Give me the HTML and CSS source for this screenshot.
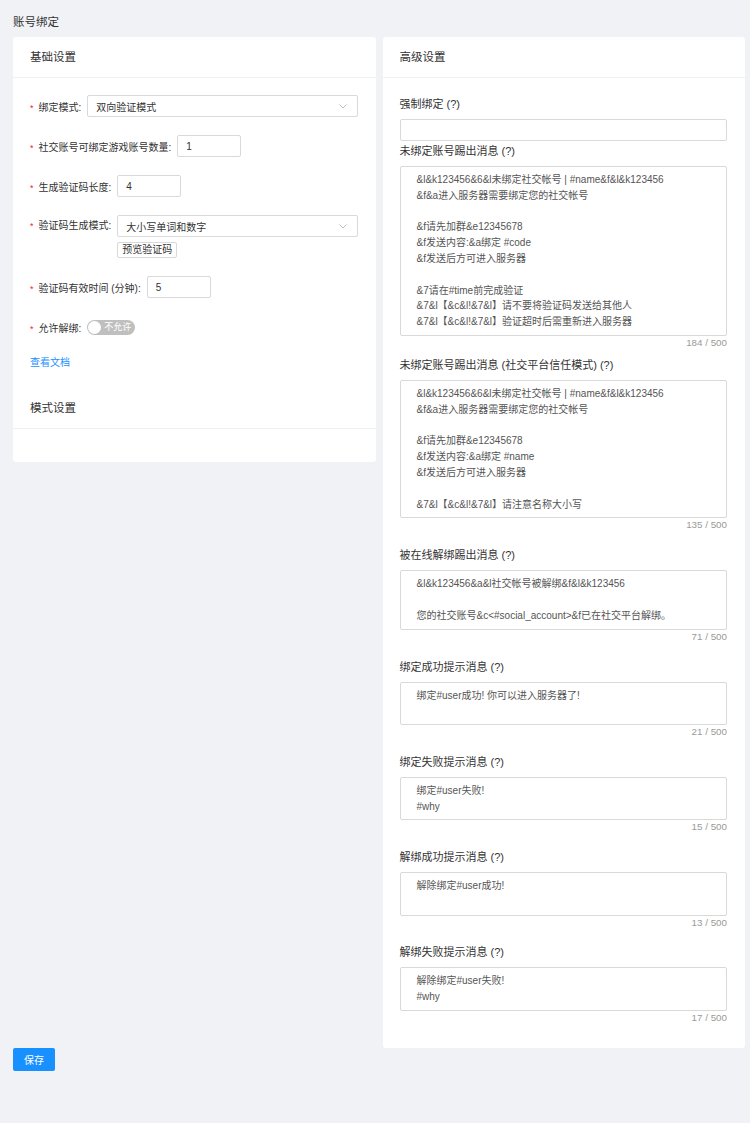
FILE: index.html
```html
<!DOCTYPE html>
<html lang="zh-CN">
<head>
  <meta charset="UTF-8" />
  <meta name="viewport" content="width=device-width, initial-scale=1" />
  <title>账号绑定</title>
  <link rel="stylesheet" href="styles.css">
</head>
<body>

  <div class="page-title">账号绑定</div>

  <div class="columns">
    <div class="card">
      <div class="card-head">基础设置</div>
      <div class="card-body basic">
        <div class="form-row">
          <label class="form-label"><span class="req">*</span>绑定模式:</label>
          <div class="select">
            <span>双向验证模式</span>
            <svg class="chevron" width="8" height="5" viewBox="0 0 8 5"><polyline points="0.5,0.5 4,4 7.5,0.5" fill="none" stroke="#bfbfbf" stroke-width="1"/></svg>
          </div>
        </div>

        <div class="form-row">
          <label class="form-label"><span class="req">*</span>社交账号可绑定游戏账号数量:</label>
          <input class="input short" type="text" value="1" />
        </div>

        <div class="form-row">
          <label class="form-label"><span class="req">*</span>生成验证码长度:</label>
          <input class="input short" type="text" value="4" />
        </div>

        <div class="form-row tall">
          <label class="form-label"><span class="req">*</span>验证码生成模式:</label>
          <div class="control">
            <div class="select">
              <span>大小写单词和数字</span>
              <svg class="chevron" width="8" height="5" viewBox="0 0 8 5"><polyline points="0.5,0.5 4,4 7.5,0.5" fill="none" stroke="#bfbfbf" stroke-width="1"/></svg>
            </div>
            <button class="btn-small">预览验证码</button>
          </div>
        </div>

        <div class="form-row">
          <label class="form-label"><span class="req">*</span>验证码有效时间 (分钟):</label>
          <input class="input short" type="text" value="5" />
        </div>

        <div class="form-row">
          <label class="form-label"><span class="req">*</span>允许解绑:</label>
          <span class="switch"><span class="knob"></span><span class="switch-text">不允许</span></span>
        </div>

        <a class="doc-link" href="#">查看文档</a>
      </div>
      <div class="card-head">模式设置</div>
      <div class="card-body empty"></div>
    </div>

    <div class="card">
      <div class="card-head">高级设置</div>
      <div class="card-body advanced">
        <div class="field plain">
          <div class="field-label">强制绑定 (?)</div>
          <input class="input wide" type="text" value="" />
        </div>

        <div class="field first">
          <div class="field-label">未绑定账号踢出消息 (?)</div>
          <textarea class="textarea" rows="10">&amp;l&amp;k123456&amp;6&amp;l未绑定社交帐号 | #name&amp;f&amp;l&amp;k123456
&amp;f&amp;a进入服务器需要绑定您的社交帐号

&amp;f请先加群&amp;e12345678
&amp;f发送内容:&amp;a绑定 #code
&amp;f发送后方可进入服务器

&amp;7请在#time前完成验证
&amp;7&amp;l【&amp;c&amp;l!&amp;7&amp;l】请不要将验证码发送给其他人
&amp;7&amp;l【&amp;c&amp;l!&amp;7&amp;l】验证超时后需重新进入服务器</textarea>
          <div class="counter">184 / 500</div>
        </div>

        <div class="field">
          <div class="field-label">未绑定账号踢出消息 (社交平台信任模式) (?)</div>
          <textarea class="textarea" rows="8">&amp;l&amp;k123456&amp;6&amp;l未绑定社交帐号 | #name&amp;f&amp;l&amp;k123456
&amp;f&amp;a进入服务器需要绑定您的社交帐号

&amp;f请先加群&amp;e12345678
&amp;f发送内容:&amp;a绑定 #name
&amp;f发送后方可进入服务器

&amp;7&amp;l【&amp;c&amp;l!&amp;7&amp;l】请注意名称大小写</textarea>
          <div class="counter">135 / 500</div>
        </div>

        <div class="field">
          <div class="field-label">被在线解绑踢出消息 (?)</div>
          <textarea class="textarea three" rows="3">&amp;l&amp;k123456&amp;a&amp;l社交帐号被解绑&amp;f&amp;l&amp;k123456

您的社交账号&amp;c&lt;#social_account&gt;&amp;f已在社交平台解绑。</textarea>
          <div class="counter">71 / 500</div>
        </div>

        <div class="field">
          <div class="field-label">绑定成功提示消息 (?)</div>
          <textarea class="textarea two" rows="2">绑定#user成功! 你可以进入服务器了!</textarea>
          <div class="counter">21 / 500</div>
        </div>

        <div class="field">
          <div class="field-label">绑定失败提示消息 (?)</div>
          <textarea class="textarea two" rows="2">绑定#user失败!
#why</textarea>
          <div class="counter">15 / 500</div>
        </div>

        <div class="field">
          <div class="field-label">解绑成功提示消息 (?)</div>
          <textarea class="textarea two" rows="2">解除绑定#user成功!</textarea>
          <div class="counter">13 / 500</div>
        </div>

        <div class="field last">
          <div class="field-label">解绑失败提示消息 (?)</div>
          <textarea class="textarea two" rows="2">解除绑定#user失败!
#why</textarea>
          <div class="counter">17 / 500</div>
        </div>
      </div>
    </div>
  </div>

  <button class="save">保存</button>

</body>
</html>
```

FILE: styles.css
```css
body {
  margin: 0;
  padding: 0 5px 54px 13px;
  background: #f0f2f5;
  font-family: "Liberation Sans", "Noto Sans CJK SC", sans-serif;
  color: #333;
}
.page-title {
  padding-top: 14px;
  line-height: 16px;
  font-size: 11.5px;
  color: #333;
  margin-bottom: 7px;
}
.columns {
  display: flex;
  align-items: flex-start;
  gap: 7px;
}
.card {
  flex: 1;
  background: white;
  border-radius: 3px;
}
.card-head {
  height: 41px;
  box-sizing: border-box;
  padding: 0 17px;
  border-bottom: 1px solid #f0f0f0;
  font-size: 11.5px;
  line-height: 41px;
  color: #333;
}
.card-body.basic {
  padding: 17px 18px 18px 17px;
}
.card-body.empty {
  height: 33px;
}
.form-row {
  display: flex;
  align-items: center;
  height: 22px;
  margin-bottom: 18px;
  font-size: 10px;
}
.form-row.tall {
  height: auto;
  align-items: flex-start;
}
.form-row.tall .form-label {
  line-height: 22px;
}
.form-label {
  white-space: nowrap;
  margin-right: 6px;
  color: #333;
}
.req {
  color: #f5222d;
  margin-right: 5px;
  font-size: 9px;
}
.control {
  flex: 1;
}
.select {
  flex: 1;
  height: 22px;
  box-sizing: border-box;
  border: 1px solid #d9d9d9;
  border-radius: 2px;
  padding: 0 10px 0 8px;
  display: flex;
  align-items: center;
  justify-content: space-between;
  font-size: 10px;
  color: #333;
}
.input {
  height: 22px;
  box-sizing: border-box;
  border: 1px solid #d9d9d9;
  border-radius: 2px;
  padding: 0 8px;
  font-family: inherit;
  font-size: 10px;
  color: #333;
  outline: none;
}
.input.short {
  width: 64px;
}
.input.wide {
  width: 100%;
  display: block;
}
.btn-small {
  display: block;
  margin-top: 5px;
  height: 16px;
  padding: 0 4px;
  border: 1px solid #d9d9d9;
  border-radius: 2px;
  background: white;
  font-family: inherit;
  font-size: 10px;
  line-height: 14px;
  color: #333;
}
.switch {
  display: inline-flex;
  align-items: center;
  width: 48px;
  height: 15px;
  box-sizing: border-box;
  padding: 1px;
  border-radius: 8px;
  background: #bfbfbf;
}
.knob {
  width: 13px;
  height: 13px;
  border-radius: 50%;
  background: white;
}
.switch-text {
  flex: 1;
  text-align: center;
  color: white;
  font-size: 9px;
  line-height: 13px;
}
.doc-link {
  display: block;
  font-size: 10px;
  line-height: 14px;
  color: #1890ff;
  text-decoration: none;
}
.card-body.advanced {
  padding: 18px 18px 23px 17px;
}
.field {
  margin-bottom: 14.7px;
}
.field.plain {
  margin-bottom: 2px;
}
.field.first {
  margin-bottom: 7px;
}
.field.last {
  margin-bottom: 0;
}
.field-label {
  font-size: 11px;
  line-height: 16px;
  margin-bottom: 7px;
  color: #333;
}
.textarea {
  display: block;
  width: 100%;
  box-sizing: border-box;
  border: 1px solid #d9d9d9;
  border-radius: 2px;
  padding: 5px 16px;
  font-family: inherit;
  font-size: 10px;
  line-height: 15.8px;
  color: #555;
  resize: none;
  overflow: hidden;
  outline: none;
}
.textarea.three {
  height: 60px;
}
.textarea.two {
  height: 43.5px;
}
.counter {
  text-align: right;
  font-size: 9.8px;
  line-height: 14px;
  color: #999;
}
.save {
  display: block;
  width: 42px;
  height: 23px;
  border: none;
  border-radius: 2px;
  background: #1890ff;
  color: white;
  font-family: inherit;
  font-size: 10px;
  cursor: pointer;
}
```
